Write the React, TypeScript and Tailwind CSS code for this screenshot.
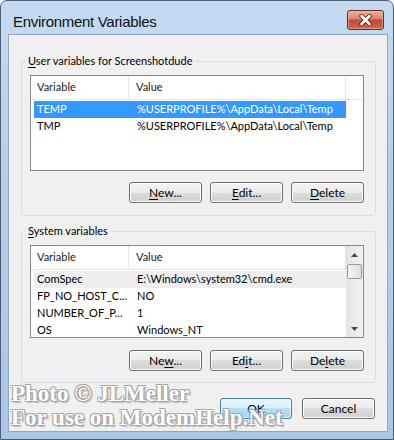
import type { ReactNode } from 'react'

const ui = 'font-["Lato","Liberation_Sans",sans-serif] text-[11px] text-black'

function Btn({ children, primary }: { children: ReactNode; primary?: boolean }) {
  return (
    <button
      className={
        primary
          ? 'h-[21px] w-[72px] rounded-[3px] border border-[#3c7fb1] bg-[linear-gradient(#e9f6fd_0%,#d7effc_50%,#b6e1f9_50%,#9fd4f3_100%)] shadow-[inset_0_0_0_1px_#ffffffcc] text-[12px] leading-none text-black'
          : 'h-[21px] w-[73px] rounded-[3px] border border-[#707070] bg-[linear-gradient(#f3f3f3_0%,#ebebeb_50%,#dddddd_50%,#d0d0d0_100%)] shadow-[inset_0_0_0_1px_#fcfcfc] text-[12px] leading-none text-black'
      }
    >
      {children}
    </button>
  )
}

function U({ children }: { children: ReactNode }) {
  return <span className="underline underline-offset-2">{children}</span>
}

interface Row {
  name: string
  value: string
}

function Header({ filler }: { filler: boolean }) {
  return (
    <div className="flex h-[24px] shrink-0 border-b border-[#e5e5e5] bg-white text-[#222]">
      <div className="flex w-[98px] items-center border-r border-[#e5e5e5] pl-[6px]">Variable</div>
      <div className="flex flex-1 items-center border-r border-[#e5e5e5] pl-[7px]">Value</div>
      {filler && <div className="w-[17px]" />}
    </div>
  )
}

function Rows({ rows, selected, blur }: { rows: Row[]; selected: number; blur?: boolean }) {
  return (
    <div className="mt-[1px] flex flex-col pl-[3px]">
      {rows.map((r, i) => (
        <div
          key={r.name}
          className={
            i === selected
              ? blur
                ? 'flex h-[17px] items-center bg-[#eeeeee]'
                : 'flex h-[17px] items-center bg-[#3399ff] text-white'
              : 'flex h-[17px] items-center'
          }
        >
          <div className="w-[96px] overflow-hidden whitespace-nowrap pl-[3px]">{r.name}</div>
          <div className="flex-1 overflow-hidden whitespace-nowrap pl-[7px]">{r.value}</div>
        </div>
      ))}
    </div>
  )
}

function ScrollBar() {
  return (
    <div className="flex w-[17px] flex-col bg-[linear-gradient(90deg,#e3e3e3,#f2f2f2)]">
      <div className="flex h-[17px] items-center justify-center">
        <svg width="7" height="4" viewBox="0 0 7 4">
          <path d="M0 4L3.5 0L7 4Z" fill="#4a4a4a" />
        </svg>
      </div>
      <div className="mx-[1px] mt-[1px] h-[15px] rounded-[2px] border border-[#9a9a9a] bg-[linear-gradient(90deg,#f4f4f4,#dedede)]" />
      <div className="flex-1" />
      <div className="flex h-[17px] items-center justify-center">
        <svg width="7" height="4" viewBox="0 0 7 4">
          <path d="M0 0L3.5 4L7 0Z" fill="#4a4a4a" />
        </svg>
      </div>
    </div>
  )
}

const userRows: Row[] = [
  { name: 'TEMP', value: '%USERPROFILE%\\AppData\\Local\\Temp' },
  { name: 'TMP', value: '%USERPROFILE%\\AppData\\Local\\Temp' },
]

const sysRows: Row[] = [
  { name: 'ComSpec', value: 'E:\\Windows\\system32\\cmd.exe' },
  { name: 'FP_NO_HOST_C...', value: 'NO' },
  { name: 'NUMBER_OF_P...', value: '1' },
  { name: 'OS', value: 'Windows_NT' },
]

export default function App() {
  return (
    <div className={`${ui} relative flex h-[440px] w-[394px] flex-col overflow-hidden rounded-t-[7px] border border-[#4d5f77] bg-[linear-gradient(#c6dbf0_0%,#b4cfeb_40%,#a9c7e7_100%)]`}>
      {/* Title bar */}
      <div className="flex h-[33px] shrink-0 items-start justify-between pl-[12px] pr-[9px] pt-[9px]">
        <span className='font-["Liberation_Sans",sans-serif] text-[15px] leading-[24px] tracking-[-0.3px] text-[#111]'>Environment Variables</span>
        <div className="flex h-[20px] w-[37px] items-center justify-center rounded-[3px] border border-[#6b2b24] bg-[linear-gradient(#eab1a3_0%,#d8826f_45%,#c3462f_50%,#d06a4e_100%)] shadow-[inset_0_0_0_1px_#f3c3b680]">
          <svg width="13" height="12" viewBox="0 0 13 12">
            <path d="M2.5 2L10.5 10M10.5 2L2.5 10" stroke="#5a2018" strokeWidth="4.4" strokeLinecap="round" />
            <path d="M2.5 2L10.5 10M10.5 2L2.5 10" stroke="#ffffff" strokeWidth="2.6" strokeLinecap="round" />
          </svg>
        </div>
      </div>

      {/* Client area */}
      <div className="mb-[7px] ml-[7px] mr-[5px] flex flex-1 flex-col border border-[#8ea6c2] bg-[#f0f0f0]">
        <fieldset className="ml-[12px] mt-[18px] w-[355px] rounded-[3px] border border-[#d5dfe5]">
          <legend className="ml-[3px] px-[3px] leading-[16px]">
            <U>U</U>ser variables for Screenshotdude
          </legend>
          <div className="px-[8px] pb-[12px] pt-[6px]">
            <div className="flex h-[96px] w-[334px] flex-col border border-[#828790] bg-white">
              <Header filler />
              <div className="pr-[17px]">
                <Rows rows={userRows} selected={0} />
              </div>
            </div>
            <div className="mt-[11px] flex w-[334px] justify-end gap-[8px]">
              <Btn>
                <U>N</U>ew...
              </Btn>
              <Btn>
                <U>E</U>dit...
              </Btn>
              <Btn>
                <U>D</U>elete
              </Btn>
            </div>
          </div>
        </fieldset>

        <fieldset className="ml-[12px] mt-[7px] w-[355px] rounded-[3px] border border-[#d5dfe5]">
          <legend className="ml-[3px] px-[3px] leading-[16px]">
            <U>S</U>ystem variables
          </legend>
          <div className="px-[8px] pb-[11px] pt-[6px]">
            <div className="flex h-[93px] w-[334px] border border-[#828790] bg-white">
              <div className="flex flex-1 flex-col">
                <Header filler={false} />
                <Rows rows={sysRows} selected={0} blur />
              </div>
              <ScrollBar />
            </div>
            <div className="mt-[12px] flex w-[334px] justify-end gap-[8px]">
              <Btn>
                Ne<U>w</U>...
              </Btn>
              <Btn>
                Ed<U>i</U>t...
              </Btn>
              <Btn>
                De<U>l</U>ete
              </Btn>
            </div>
          </div>
        </fieldset>

        <div className="mr-[12px] mt-[15px] flex justify-end gap-[10px]">
          <Btn primary>OK</Btn>
          <Btn>Cancel</Btn>
        </div>
      </div>

      {/* Watermark */}
      <div className='pointer-events-none absolute left-[10px] top-[381px] font-["Liberation_Serif",serif] text-[23px] font-bold leading-[24px] text-white opacity-90 [text-shadow:1px_1px_0_#a0a0a0,-1px_-1px_0_#a0a0a0,1px_-1px_0_#a0a0a0,-1px_1px_0_#a0a0a0,2px_2px_1px_#b5b5b5]'>
        <div>Photo © JLMeller</div>
        <div>For use on ModemHelp.Net</div>
      </div>
    </div>
  )
}
